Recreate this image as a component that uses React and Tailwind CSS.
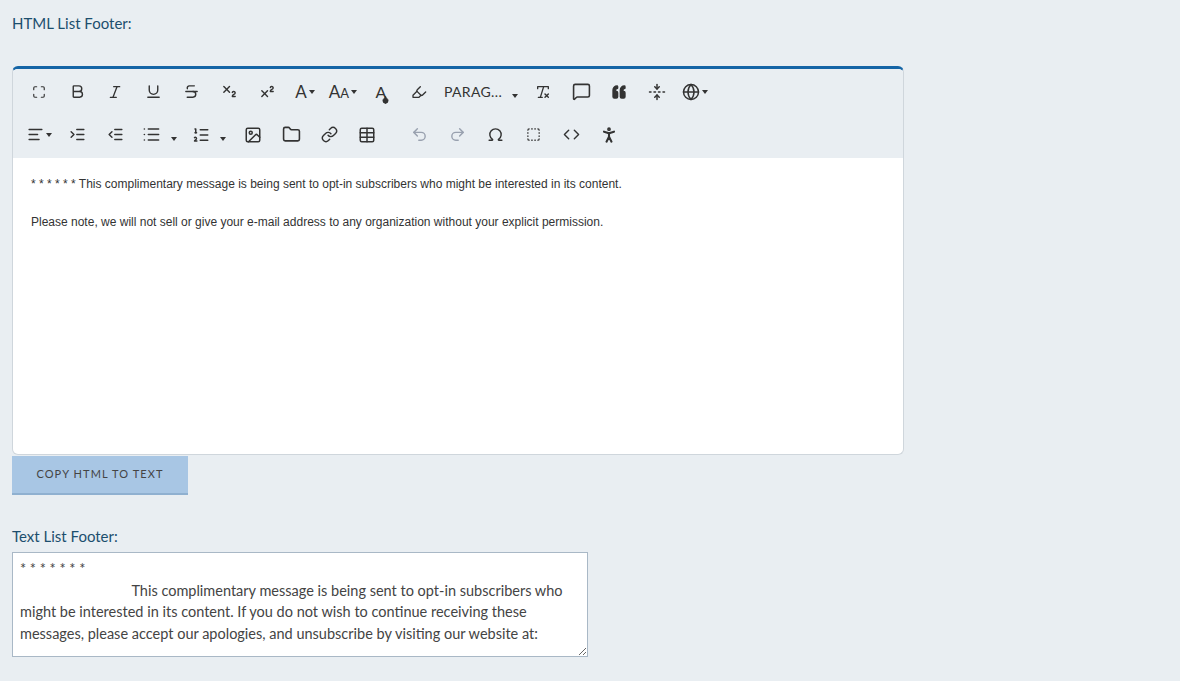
import {
  Maximize, Bold, Italic, Underline, Strikethrough, Subscript, Superscript, Droplet, Highlighter,
  RemoveFormatting, MessageSquare, Quote, FoldVertical, Globe, AlignLeft, IndentIncrease, IndentDecrease,
  List, ListOrdered, Image, Folder, Link, Table, Undo2, Redo2, Omega, SquareDashed, Code, PersonStanding, ChevronDown,
} from "lucide-react";

const font = { fontFamily: "Lato, 'Open Sans', sans-serif" };

function Caret() {
  return <span className="ml-0.5 inline-block h-0 w-0 border-x-[3.5px] border-t-[4px] border-x-transparent border-t-[#333]" />;
}

function Btn({ children, w = "w-[38px]", dim }) {
  return (
    <div className={`flex h-[34px] items-center justify-center ${w} ${dim ? "text-gray-400" : "text-[#333]"}`}>
      {children}
    </div>
  );
}

const s = { size: 17, strokeWidth: 2 };

const footer =
  "* * * * * * *\n                              This complimentary message is being sent to opt-in subscribers who might be interested in its content. If you do not wish to continue receiving these messages, please accept our apologies, and unsubscribe by visiting our website at:";

export default function App() {
  return (
    <div className="min-h-[681px] bg-[#e9eef2] px-3 pt-3" style={font}>
      <p className="text-[15px] text-[#1c4e6e]">HTML List Footer:</p>
      <div className="mt-[31px] w-[892px] overflow-hidden rounded-md border border-[#cfd6dc] border-t-[3px] border-t-[#1565a6] bg-white">
        <div className="bg-[#e9eef2] px-[7px] pb-[6px] pt-[6px]">
          <div className="flex items-center">
            <Btn><Maximize size={14} /></Btn>
            <Btn><Bold {...s} /></Btn>
            <Btn><Italic size={16} /></Btn>
            <Btn><Underline {...s} /></Btn>
            <Btn><Strikethrough {...s} /></Btn>
            <Btn><Subscript {...s} /></Btn>
            <Btn><Superscript {...s} /></Btn>
            <Btn><span className="text-[17px]">A</span><Caret /></Btn>
            <Btn><span className="text-[17px]">A<span className="text-[13px]">A</span></span><Caret /></Btn>
            <Btn><span className="relative text-[16px]">A<Droplet size={9} className="absolute -right-1 bottom-0 fill-[#333]" /></span></Btn>
            <Btn><Highlighter size={16} /></Btn>
            <Btn w="w-[86px]"><span className="text-[14px] tracking-wide text-[#333]">PARAG...</span><span className="ml-2"><Caret /></span></Btn>
            <Btn><RemoveFormatting size={16} /></Btn>
            <Btn><MessageSquare size={19} /></Btn>
            <Btn><Quote size={16} className="rotate-180 fill-[#333]" /></Btn>
            <Btn><FoldVertical size={18} /></Btn>
            <Btn><Globe size={18} /><Caret /></Btn>
          </div>
          <div className="mt-[9px] flex items-center">
            <Btn><AlignLeft {...s} /><Caret /></Btn>
            <Btn><IndentIncrease {...s} /></Btn>
            <Btn><IndentDecrease {...s} /></Btn>
            <Btn w="w-[50px]"><List size={19} /><span className="ml-2"><Caret /></span></Btn>
            <Btn w="w-[50px]"><ListOrdered size={18} /><span className="ml-2"><Caret /></span></Btn>
            <Btn><Image size={18} /></Btn>
            <Btn><Folder size={19} /></Btn>
            <Btn><Link size={17} /></Btn>
            <Btn><Table size={18} /></Btn>
            <div className="w-[14px]" />
            <Btn dim><Undo2 size={17} /></Btn>
            <Btn dim><Redo2 size={17} /></Btn>
            <Btn><Omega {...s} /></Btn>
            <Btn><SquareDashed size={15} /></Btn>
            <Btn><Code {...s} /></Btn>
            <Btn><PersonStanding size={20} strokeWidth={2.5} /></Btn>
          </div>
        </div>
        <div className="h-[296px] px-[18px] pt-[17px] text-[12px] text-[#333]" style={{ fontFamily: "'Liberation Sans', Arial, sans-serif" }}>
          <p>* * * * * * This complimentary message is being sent to opt-in subscribers who might be interested in its content.</p>
          <p className="mt-[20px]">Please note, we will not sell or give your e-mail address to any organization without your explicit permission.</p>
        </div>
      </div>
      <button className="mt-px h-[39px] w-[176px] border-b-2 border-[#8fb0d0] bg-[#a8c6e4] text-[11px] tracking-[0.1em] text-[#444]">
        COPY HTML TO TEXT
      </button>
      <p className="mt-[30px] text-[15px] text-[#1c4e6e]">Text List Footer:</p>
      <textarea
        readOnly
        value={footer}
        className="mt-[5px] block h-[105px] w-[576px] resize border border-[#a9b8c6] bg-white px-[7px] pt-[5px] text-[14.5px] leading-[21.5px] text-[#444] outline-none"
        style={font}
      />
    </div>
  );
}
